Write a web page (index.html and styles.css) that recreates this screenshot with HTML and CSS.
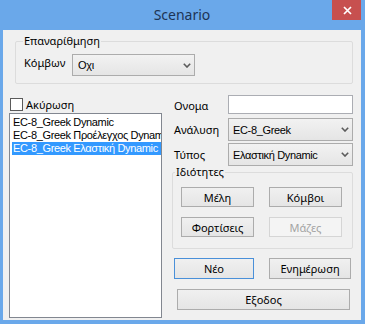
FILE: index.html
```html
<!DOCTYPE html>
<html lang="el">
<head>
    <meta charset="UTF-8">
    <meta name="viewport" content="width=device-width, initial-scale=1.0">
    <title>Scenario</title>
    <link rel="stylesheet" href="styles.css">
</head>
<body>
    <div class="window">
        <div class="titlebar">
            <span></span>
            <div class="title">Scenario</div>
            <div class="close">
                <svg width="9" height="9" viewBox="0 0 9 9"><path d="M1 1L8 8M8 1L1 8" stroke="#fff" stroke-width="1.7" fill="none"/></svg>
            </div>
        </div>

        <div class="client">
            <fieldset class="group renumber">
                <legend>Επαναρίθμηση</legend>
                <div class="renumber-row">
                    <span class="label">Κόμβων</span>
                    <div class="combo nodes-combo">
                        <span class="combo-text">Οχι</span>
                        <svg class="arrow" width="8" height="5" viewBox="0 0 8 5"><polyline points="0.8,0.8 4,4 7.2,0.8" fill="none" stroke="#5b5b5b" stroke-width="1.6"/></svg>
                    </div>
                </div>
            </fieldset>

            <div class="main">
                <div class="left">
                    <label class="check"><span class="check-box"></span>Ακύρωση</label>
                    <ul class="list">
                        <li>EC-8_Greek Dynamic</li>
                        <li>EC-8_Greek Προέλεγχος Dynamic</li>
                        <li class="selected">EC-8_Greek Ελαστική Dynamic</li>
                    </ul>
                </div>

                <div class="right">
                    <div class="form">
                        <span class="label">Ονομα</span>
                        <div class="textbox"></div>

                        <span class="label">Ανάλυση</span>
                        <div class="combo">
                            <span class="combo-text">EC-8_Greek</span>
                            <svg class="arrow" width="8" height="5" viewBox="0 0 8 5"><polyline points="0.8,0.8 4,4 7.2,0.8" fill="none" stroke="#5b5b5b" stroke-width="1.6"/></svg>
                        </div>

                        <span class="label">Τύπος</span>
                        <div class="combo">
                            <span class="combo-text">Ελαστική Dynamic</span>
                            <svg class="arrow" width="8" height="5" viewBox="0 0 8 5"><polyline points="0.8,0.8 4,4 7.2,0.8" fill="none" stroke="#5b5b5b" stroke-width="1.6"/></svg>
                        </div>
                    </div>

                    <fieldset class="group props">
                        <legend>Ιδιότητες</legend>
                        <div class="props-grid">
                            <button class="btn">Μέλη</button>
                            <button class="btn">Κόμβοι</button>
                            <button class="btn">Φορτίσεις</button>
                            <button class="btn" disabled>Μάζες</button>
                        </div>
                    </fieldset>

                    <div class="actions">
                        <button class="btn default new-btn">Νέο</button>
                        <button class="btn update-btn">Ενημέρωση</button>
                    </div>
                    <button class="btn exit-btn">Εξοδος</button>
                </div>
            </div>
        </div>
    </div>
</body>
</html>
```

FILE: styles.css
```css
* {
    margin: 0;
    padding: 0;
    box-sizing: border-box;
}

body {
    font-family: 'Noto Sans', 'Open Sans', sans-serif;
    font-size: 11px;
    color: #000;
    background: #6aa8ea;
}

.window {
    width: 365px;
    height: 324px;
    background: #6aa8ea;
    display: flex;
    flex-direction: column;
    padding: 0 4px 4px 3px;
}

/* title bar */
.titlebar {
    height: 30px;
    display: grid;
    grid-template-columns: 1fr auto 1fr;
    align-items: start;
}

.title {
    font-size: 14px;
    line-height: 30px;
    color: #1d3455;
}

.close {
    justify-self: end;
    width: 29px;
    height: 20px;
    background: #c7504f;
    display: flex;
    align-items: center;
    justify-content: center;
    padding-left: 1px;
}

/* client area */
.client {
    flex: 1;
    background: #f0f0f0;
    padding-top: 4px;
}

.group {
    border: 1px solid #dcdcdc;
    border-radius: 2px;
}

.group legend {
    line-height: 14px;
    padding: 0 1px;
}

.renumber {
    margin: 0 8px 0 12px;
    padding: 6px 8px 7px 8px;
}

.renumber legend {
    margin-left: -1px;
}

.renumber-row {
    display: flex;
    align-items: flex-start;
}

.renumber-row .label {
    width: 48px;
    line-height: 15px;
    margin-top: 1px;
}

.combo {
    height: 23px;
    border: 1px solid #acacac;
    background: linear-gradient(#f2f2f2, #e5e5e5);
    display: flex;
    align-items: center;
    padding: 0 3px 0 4px;
    font-family: 'Liberation Sans', Arial, sans-serif;
    font-size: 11px;
    letter-spacing: -0.35px;
}

.nodes-combo {
    width: 123px;
    height: 22px;
    padding-left: 5px;
}

.combo-text {
    flex: 1;
    white-space: nowrap;
    overflow: hidden;
}

.arrow {
    flex: none;
}

/* lower part */
.main {
    display: flex;
    gap: 10px;
    margin-top: 11px;
    padding: 0 8px 0 6px;
}

.left {
    width: 153px;
}

.check {
    height: 18px;
    display: flex;
    align-items: center;
    gap: 3px;
    padding-left: 1px;
    margin-bottom: 0;
}

.check-box {
    width: 13px;
    height: 13px;
    border: 1px solid #5a5a5a;
    background: #fff;
    margin-top: 1px;
}

.list {
    list-style: none;
    height: 205px;
    border: 1px solid #828790;
    background: #fff;
    padding: 2px 0 0 2px;
    overflow: hidden;
    font-family: 'Liberation Sans', Arial, sans-serif;
    font-size: 11px;
    letter-spacing: -0.35px;
}

.list li {
    height: 13px;
    line-height: 13px;
    padding-left: 1px;
    white-space: nowrap;
}

.list li.selected {
    background: #3399ff;
    color: #fff;
}

.right {
    flex: 1;
}

.form {
    display: grid;
    grid-template-columns: 56px 1fr;
    row-gap: 2px;
    align-items: center;
}

.form .label {
    padding-left: 2px;
}

.textbox {
    height: 19px;
    border: 1px solid #abadb3;
    background: #fff;
    margin-bottom: 2px;
}

.props {
    margin-top: -1px;
    padding: 8px 8px 11px 8px;
}

.props legend {
    margin-left: -6px;
}

.props-grid {
    display: grid;
    grid-template-columns: 73px 73px;
    column-gap: 15px;
    row-gap: 10px;
}

.btn {
    height: 20px;
    border: 1px solid #acacac;
    background: linear-gradient(#f0f0f0, #e5e5e5);
    font-family: 'Noto Sans', 'Open Sans', sans-serif;
    font-size: 11px;
    color: #000;
    display: block;
}

.btn:disabled {
    border-color: #d5d5d5;
    background: #f4f4f4;
    color: #a3a3a3;
}

.btn.default {
    border-color: #4a90d9;
}

.actions {
    display: flex;
    gap: 15px;
    margin-top: 9px;
    padding-left: 2px;
}

.new-btn {
    width: 80px;
    height: 21px;
}

.update-btn {
    width: 82px;
    height: 21px;
}

.exit-btn {
    width: 173px;
    height: 21px;
    margin: 10px 0 0 5px;
}
```
